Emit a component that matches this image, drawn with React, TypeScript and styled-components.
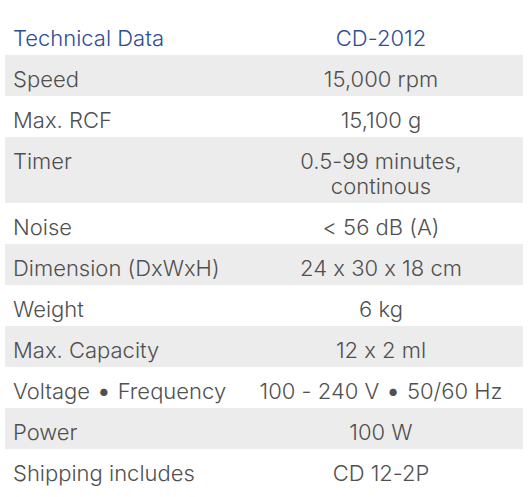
import React from 'react'
import styled, { createGlobalStyle } from 'styled-components'

interface Spec {
  label: string
  value: string[]
}

const SPECS: Spec[] = [
  { label: 'Speed', value: ['15,000 rpm'] },
  { label: 'Max. RCF', value: ['15,100 g'] },
  { label: 'Timer', value: ['0.5-99 minutes,', 'continous'] },
  { label: 'Noise', value: ['< 56 dB (A)'] },
  { label: 'Dimension (DxWxH)', value: ['24 x 30 x 18 cm'] },
  { label: 'Weight', value: ['6 kg'] },
  { label: 'Max. Capacity', value: ['12 x 2 ml'] },
  { label: 'Voltage • Frequency', value: ['100 - 240 V • 50/60 Hz'] },
  { label: 'Power', value: ['100 W'] },
  { label: 'Shipping includes', value: ['CD 12-2P'] },
]

const GlobalStyle = createGlobalStyle`
  body {
    margin: 0;
    background: #ffffff;
    font-family: Inter, "Liberation Sans", Arial, sans-serif;
  }
`

const StyledPage = styled.div`
  padding: 14px 5px 0 5px;
  width: 518px;
`

const StyledTable = styled.div`
  display: grid;
  grid-template-columns: 234px 1fr;
`

interface StyledCellProps {
  $shaded: boolean
  $head?: boolean
}

const StyledLabel = styled.div<StyledCellProps>`
  padding: 12px 8px 4px 8px;
  font-size: 22px;
  font-weight: 300;
  line-height: 25px;
  white-space: nowrap;
  font-feature-settings: "calt" 0;
  color: ${props => (props.$head ? '#2d4e96' : '#505050')};
  background-color: ${props => (props.$shaded ? '#ececec' : 'transparent')};
`

const StyledValue = styled(StyledLabel)`
  text-align: center;
  padding-left: 0;
  padding-right: 0;
`

const StyledBullet = styled.span`
  font-size: 27px;
  line-height: 0;
  vertical-align: -1px;
`

// swaps each bullet for a bigger one, like the original sheet
const withBullets = (text: string) =>
  text.split('•').map((part, i) => (
    <React.Fragment key={i}>
      {i > 0 && <StyledBullet>•</StyledBullet>}
      {part}
    </React.Fragment>
  ))

const App: React.FC = () => {
  return (
    <StyledPage>
      <GlobalStyle />
      <StyledTable>
        <StyledLabel $shaded={false} $head>Technical Data</StyledLabel>
        <StyledValue $shaded={false} $head>CD-2012</StyledValue>
        {SPECS.map((spec, i) => (
          <React.Fragment key={spec.label}>
            <StyledLabel $shaded={i % 2 === 0}>{withBullets(spec.label)}</StyledLabel>
            <StyledValue $shaded={i % 2 === 0}>
              {spec.value.map(line => (
                <div key={line}>{withBullets(line)}</div>
              ))}
            </StyledValue>
          </React.Fragment>
        ))}
      </StyledTable>
    </StyledPage>
  )
}

export default App
